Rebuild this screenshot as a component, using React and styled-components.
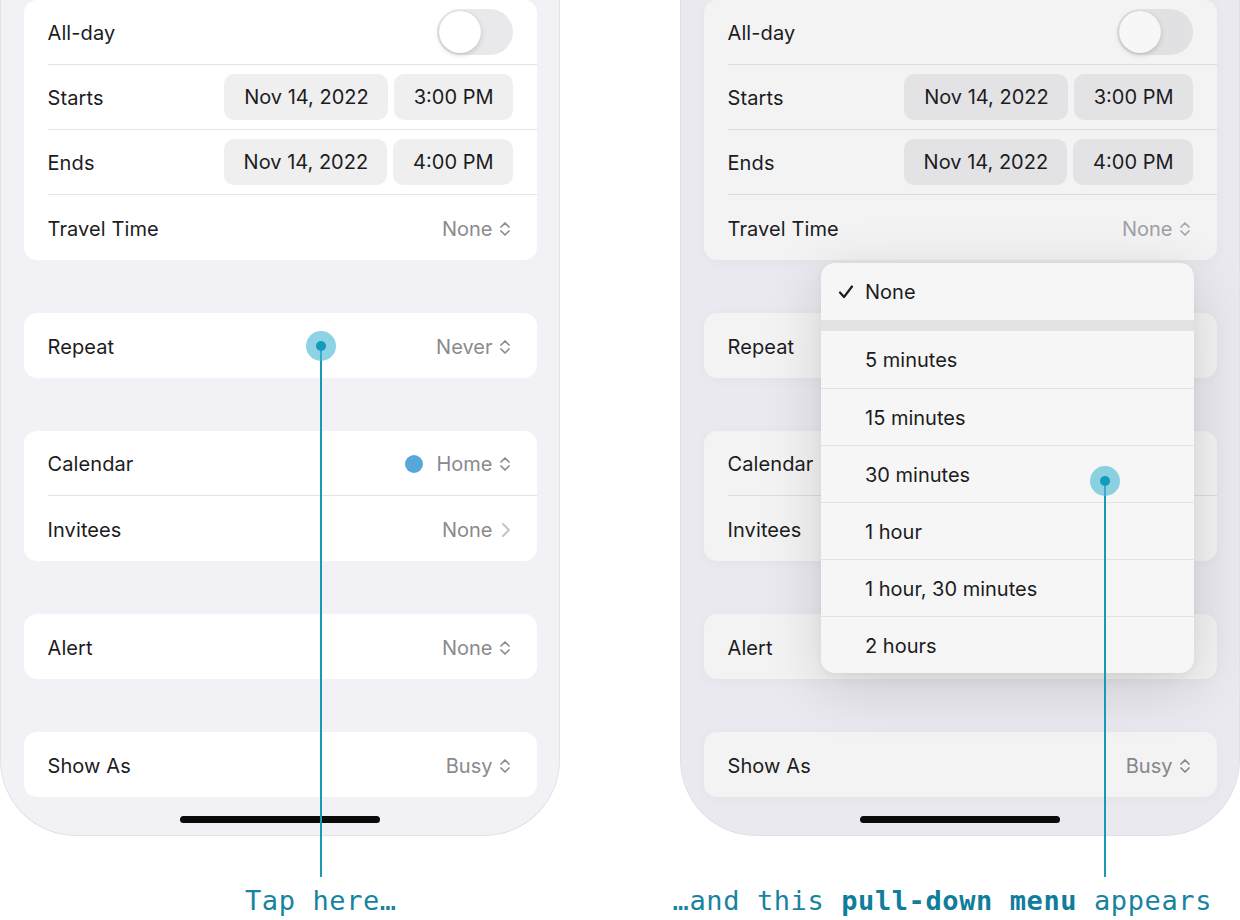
import React from "react";
import styled, { createGlobalStyle, css } from "styled-components";

const GlobalStyle = createGlobalStyle`
  html, body {
    margin: 0;
    background: #ffffff;
  }
  body {
    font-family: Inter, "Noto Sans", sans-serif;
    -webkit-font-smoothing: antialiased;
  }
`;

// Layout
const Stage = styled.div`
  display: grid;
  grid-template-columns: 560px 560px;
  column-gap: 120px;
  width: 1240px;
  height: 920px;
  overflow: hidden;
`;

const Column = styled.div`
  position: relative;
  display: flex;
  flex-direction: column;
`;

const Phone = styled.div`
  position: relative;
  box-sizing: border-box;
  height: 836px;
  background: #f1f1f6;
  border: 1.5px solid #e2e2e6;
  border-top: none;
  border-radius: 0 0 76px 76px;
  padding: 0 22.5px;
  display: flex;
  flex-direction: column;
  gap: 53px;
  overflow: hidden;
`;

const Dim = styled.div`
  position: absolute;
  inset: 0;
  background: rgba(40, 40, 60, 0.035);
  pointer-events: none;
`;

const Card = styled.div`
  background: ${(p) => (p.$dim ? "#fbfbfb" : "#ffffff")};
  border-radius: 13px;
  padding-left: 24px;
  display: flex;
  flex-direction: column;
  ${(p) =>
    p.$dim &&
    css`
      box-shadow: 0 2px 14px rgba(0, 0, 0, 0.03);
    `}
`;

const Row = styled.div`
  box-sizing: border-box;
  height: 65px;
  display: flex;
  align-items: center;
  justify-content: space-between;
  padding: 2px 24px 0 0;
  border-bottom: ${(p) => (p.$last ? "none" : "1px solid #e4e4e7")};
`;

const Label = styled.span`
  font-size: 20px;
  color: #1c1c1e;
  letter-spacing: 0.1px;
`;

const Value = styled.span`
  display: flex;
  align-items: center;
  gap: 6px;
  padding-right: 2px;
  font-size: 20px;
  color: ${(p) => (p.$dim ? "#a5a5aa" : "#8a8a8e")};
`;

const Pills = styled.div`
  display: flex;
  gap: 6px;
  margin-top: -2px;
`;

const Pill = styled.span`
  box-sizing: border-box;
  height: 46px;
  padding: 0 19px 0 20px;
  display: flex;
  align-items: center;
  border-radius: 10px;
  background: ${(p) => (p.$dim ? "#ebebec" : "#efeff0")};
  font-size: 20px;
  color: #1c1c1e;
`;

const Toggle = styled.span`
  position: relative;
  width: 76px;
  height: 46px;
  margin-top: -2px;
  border-radius: 23px;
  background: #e9e9eb;
`;

const Knob = styled.span`
  position: absolute;
  left: 2px;
  top: 2px;
  width: 42px;
  height: 42px;
  border-radius: 50%;
  background: #ffffff;
  box-shadow: 0 2px 5px rgba(0, 0, 0, 0.16), 0 0 1px rgba(0, 0, 0, 0.1);
`;

const Dot = styled.span`
  width: 18px;
  height: 18px;
  border-radius: 50%;
  background: #58a7da;
  margin-right: 7px;
`;

const HomeBar = styled.div`
  position: absolute;
  left: 50%;
  bottom: 12px;
  width: 200px;
  height: 7px;
  margin-left: -100px;
  border-radius: 4px;
  background: #0a0a0a;
`;

// Pull-down menu
const Menu = styled.div`
  position: absolute;
  left: 140px;
  top: 263px;
  width: 373px;
  border-radius: 14px;
  background: #f6f6f6;
  overflow: hidden;
  box-shadow: 0 14px 60px rgba(0, 0, 0, 0.14), 0 2px 10px rgba(0, 0, 0, 0.05);
`;

const MenuItem = styled.div`
  box-sizing: border-box;
  height: 57px;
  display: flex;
  align-items: center;
  padding: 1px 0 0 44px;
  font-size: 20px;
  color: #1c1c1e;
  border-top: ${(p) => (p.$sep ? "1px solid #e2e2e3" : "none")};
  position: relative;
`;

const Check = styled.svg`
  position: absolute;
  left: 17px;
  top: 50%;
  margin-top: -8px;
`;

const MenuGap = styled.div`
  height: 11px;
  background: #e3e3e4;
`;

// Annotation
const Marker = styled.div`
  position: absolute;
  left: ${(p) => p.$x - 15}px;
  top: ${(p) => p.$y - 15}px;
  width: 30px;
  height: 30px;
  border-radius: 50%;
  background: rgba(72, 184, 212, 0.62);
  z-index: 3;

  &::after {
    content: "";
    position: absolute;
    left: 10px;
    top: 10px;
    width: 10px;
    height: 10px;
    border-radius: 50%;
    background: #139bbd;
  }
`;

const Leader = styled.div`
  position: absolute;
  left: ${(p) => p.$x - 1}px;
  top: ${(p) => p.$y}px;
  width: 2px;
  height: ${(p) => 877 - p.$y}px;
  background: #1a98b8;
  z-index: 2;
`;

const Caption = styled.div`
  margin-top: 49px;
  display: flex;
  justify-content: ${(p) => (p.$align === "right" ? "flex-end" : "flex-start")};
  padding: ${(p) => p.$pad};
  font-family: "DejaVu Sans Mono", "Liberation Mono", monospace;
  font-size: 27px;
  line-height: 32px;
  letter-spacing: 0.6px;
  color: #17839f;
  white-space: nowrap;

  b {
    font-weight: 700;
    color: #0f7d9b;
  }
`;

const UpDown = ({ color = "#8a8a8e" }) => (
  <svg width="12" height="18" viewBox="0 0 12 18" fill="none">
    <path
      d="M2 7 L6 3 L10 7 M2 11 L6 15 L10 11"
      stroke={color}
      strokeWidth="1.7"
      strokeLinecap="round"
      strokeLinejoin="round"
    />
  </svg>
);

const Chevron = () => (
  <svg width="12" height="18" viewBox="0 0 12 18" fill="none">
    <path
      d="M4 3 L10 9 L4 15"
      stroke="#c4c4c8"
      strokeWidth="2"
      strokeLinecap="round"
      strokeLinejoin="round"
    />
  </svg>
);

const travelOptions = [
  "5 minutes",
  "15 minutes",
  "30 minutes",
  "1 hour",
  "1 hour, 30 minutes",
  "2 hours",
];

function EventForm({ dim }) {
  const muted = dim ? "#a9a9ae" : "#8a8a8e";
  return (
    <>
      <Card $dim={dim}>
        <Row>
          <Label>All-day</Label>
          <Toggle>
            <Knob />
          </Toggle>
        </Row>
        <Row>
          <Label>Starts</Label>
          <Pills>
            <Pill $dim={dim}>Nov 14, 2022</Pill>
            <Pill $dim={dim}>3:00 PM</Pill>
          </Pills>
        </Row>
        <Row>
          <Label>Ends</Label>
          <Pills>
            <Pill $dim={dim}>Nov 14, 2022</Pill>
            <Pill $dim={dim}>4:00 PM</Pill>
          </Pills>
        </Row>
        <Row $last>
          <Label>Travel Time</Label>
          <Value $dim={dim}>
            None <UpDown color={muted} />
          </Value>
        </Row>
      </Card>

      <Card $dim={dim}>
        <Row $last>
          <Label>Repeat</Label>
          <Value>
            Never <UpDown />
          </Value>
        </Row>
      </Card>

      <Card $dim={dim}>
        <Row>
          <Label>Calendar</Label>
          <Value>
            <Dot />
            Home <UpDown />
          </Value>
        </Row>
        <Row $last>
          <Label>Invitees</Label>
          <Value>
            None <Chevron />
          </Value>
        </Row>
      </Card>

      <Card $dim={dim}>
        <Row $last>
          <Label>Alert</Label>
          <Value>
            None <UpDown />
          </Value>
        </Row>
      </Card>

      <Card $dim={dim}>
        <Row $last>
          <Label>Show As</Label>
          <Value>
            Busy <UpDown />
          </Value>
        </Row>
      </Card>
    </>
  );
}

export default function App() {
  return (
    <>
      <GlobalStyle />
      <Stage>
        <Column>
          <Phone>
            <EventForm />
            <HomeBar />
          </Phone>
          <Marker $x={321} $y={346} />
          <Leader $x={321} $y={346} />
          <Caption $align="left" $pad="0 0 0 245px">
            <span>Tap here…</span>
          </Caption>
        </Column>

        <Column>
          <Phone>
            <EventForm dim />
            <Dim />
            <Menu>
              <MenuItem>
                <Check width="16" height="16" viewBox="0 0 16 16" fill="none">
                  <path
                    d="M2 8.5 L6 13 L14 2.5"
                    stroke="#1c1c1e"
                    strokeWidth="2.2"
                    strokeLinecap="round"
                    strokeLinejoin="round"
                  />
                </Check>
                None
              </MenuItem>
              <MenuGap />
              {travelOptions.map((opt, i) => (
                <MenuItem key={opt} $sep={i > 0}>
                  {opt}
                </MenuItem>
              ))}
            </Menu>
            <HomeBar />
          </Phone>
          <Marker $x={425} $y={481} />
          <Leader $x={425} $y={481} />
          <Caption $align="right" $pad="0 28px 0 0">
            <span>
              …and this <b>pull-down menu</b> appears
            </span>
          </Caption>
        </Column>
      </Stage>
    </>
  );
}
